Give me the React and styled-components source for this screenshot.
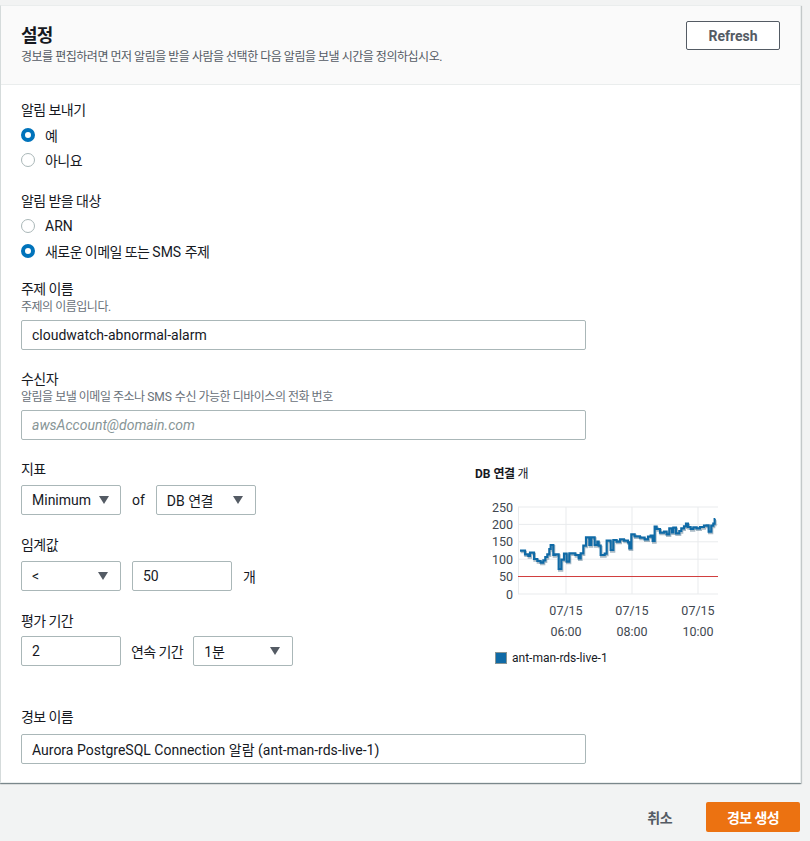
import React from 'react'
import styled, { createGlobalStyle } from 'styled-components'

const GlobalStyle = createGlobalStyle`
  html, body {
    margin: 0;
    padding: 0;
    background: #f2f3f3;
  }
  body {
    font-family: Roboto, "Noto Sans CJK KR", sans-serif;
    font-size: 14px;
    color: #16191f;
  }
  * {
    box-sizing: border-box;
  }
`

// hangul in the reference font is a little narrower than Noto CJK
const Ko = styled.span`
  letter-spacing: -0.04em;
`

const Page = styled.div`
  width: 810px;
  height: 841px;
  padding-top: 5px;
`

const Panel = styled.div`
  width: 801px;
  background: #fff;
  border: 1px solid #eaeded;
  border-left-color: #d5dbdb;
  box-shadow: 0 1px 1px 0 rgba(0, 28, 36, 0.3), 1px 1px 1px 0 rgba(0, 28, 36, 0.15),
    -1px 1px 1px 0 rgba(0, 28, 36, 0.15);
`

const Header = styled.div`
  display: flex;
  justify-content: space-between;
  align-items: flex-start;
  padding: 15px 20px 19px 20px;
  background: #fafafa;
  border-bottom: 1px solid #eaeded;
`

const Title = styled.h2`
  margin: 3px 0 0 0;
  font-size: 18px;
  line-height: 24px;
  font-weight: 700;
  color: #16191f;
`

const Subtitle = styled.div`
  margin-top: 1px;
  font-size: 12px;
  line-height: 16px;
  color: #545b64;
`

const OutlineButton = styled.button`
  width: 94px;
  height: 29px;
  border: 1px solid #545b64;
  border-radius: 2px;
  background: #fff;
  color: #545b64;
  font-family: inherit;
  font-size: 14px;
  font-weight: 700;
  padding: 0;
`

const Body = styled.div`
  padding: 15px 20px 18px 20px;
`

const Section = styled.div`
  margin-top: ${p => p.$mt ?? 0}px;
`

const Label = styled.div`
  font-size: 14px;
  line-height: 20px;
  color: #16191f;
`

const Desc = styled.div`
  font-size: 12px;
  line-height: 16px;
  color: #687078;
`

const RadioGroup = styled.div`
  margin-top: 3px;
  display: flex;
  flex-direction: column;
  gap: 1px;
`

const RadioRow = styled.label`
  display: flex;
  align-items: center;
  height: 24px;
  gap: 10px;
  font-size: 14px;
  color: #16191f;
`

const RadioDot = styled.span`
  width: 14px;
  height: 14px;
  border-radius: 50%;
  background: #fff;
  border: ${p => (p.$on ? '4px solid #0073bb' : '1px solid #aab7b8')};
`

const TextInput = styled.div`
  margin-top: ${p => p.$mt ?? 5}px;
  width: ${p => p.$w ?? 565}px;
  height: 30px;
  border: 1px solid #aab7b8;
  border-radius: 2px;
  padding: 0 10px;
  display: flex;
  align-items: center;
  font-size: 14px;
  color: ${p => (p.$placeholder ? '#879596' : '#16191f')};
  font-style: ${p => (p.$placeholder ? 'italic' : 'normal')};
  background: #fff;
`

const MetricArea = styled.div`
  display: flex;
  margin-top: 19px;
`

const LeftCol = styled.div`
  width: 454px;
`

const ChartCol = styled.div`
  padding-top: 7px;
`

const Row = styled.div`
  display: flex;
  align-items: center;
  margin-top: ${p => p.$mt ?? 6}px;
  gap: ${p => p.$gap ?? 11}px;
`

const Select = styled.div`
  width: 100px;
  height: 30px;
  border: 1px solid #aab7b8;
  border-radius: 2px;
  display: flex;
  align-items: center;
  justify-content: ${p => (p.$tight ? 'flex-start' : 'space-between')};
  gap: 8px;
  padding: 0 12px 0 10px;
  font-size: 14px;
  color: #16191f;
  background: #fff;
`

const Arrow = styled.span`
  width: 0;
  height: 0;
  border-left: 5px solid transparent;
  border-right: 5px solid transparent;
  border-top: 8px solid #545b64;
`

const Inline = styled.span`
  font-size: 14px;
  color: #16191f;
`

const ChartTitle = styled.div`
  font-size: 12px;
  line-height: 16px;
  color: #16191f;
  b {
    font-weight: 700;
  }
`

const ChartSvg = styled.svg`
  display: block;
  margin: 13px 0 0 5px;
`

const Legend = styled.div`
  display: flex;
  align-items: center;
  gap: 5px;
  margin: 10px 0 0 20px;
  font-size: 12px;
  line-height: 16px;
  color: #16191f;
`

const Swatch = styled.span`
  width: 12px;
  height: 12px;
  background: #0f6aa6;
  border: 1px solid #879596;
`

const Footer = styled.div`
  display: flex;
  justify-content: flex-end;
  align-items: center;
  padding: 19px 10px 0 0;
  gap: 14px;
`

const LinkButton = styled.button`
  height: 30px;
  border: none;
  background: transparent;
  padding: 0 20px;
  font-family: inherit;
  font-size: 14px;
  font-weight: 700;
  color: #545b64;
`

const PrimaryButton = styled.button`
  width: 94px;
  height: 30px;
  border: none;
  border-radius: 2px;
  background: #ec7211;
  color: #fff;
  font-family: inherit;
  font-size: 14px;
  font-weight: 700;
`

const linePath =
  'M120,167 H135 V178 H145 V183 H150 V173 H162 V192 H172 V198 H182 V203 H190 V196 H196 V186 H202 V178 H208 V162 H212 V150 H220 V180 H226 V178 H236 V222 H244 V194 H252 V176 H260 V200 H268 V175 H286 V180 H296 V190 H302 V175 H310 V152 H318 V127 H328 V150 H334 V127 H344 V150 H352 V140 H356 V152 H362 V180 H374 V176 H380 V137 H392 V165 H400 V135 H410 V140 H420 V133 H432 V137 H444 V142 H448 V160 H454 V118 H464 V124 H480 V128 H494 V133 H504 V125 H512 V122 H518 V138 H524 V95 H530 V102 H540 V113 H552 V110 H560 V118 H568 V100 H576 V112 H580 V98 H588 V115 H598 V108 H604 V100 H612 V94 H618 V86 H624 V96 H632 V102 H640 V97 H650 V100 H660 V96 H672 V92 H680 V91 H686 V110 H694 V92 H700 V86 H704 V72 H706'

const yTicks = [250, 200, 150, 100, 50, 0]
const xTicks = [86, 152, 218]
const axisFont = { fontSize: 12.5, fill: '#414750', fontFamily: 'Roboto, sans-serif' }

const Chart = () => (
  <ChartSvg width="250" height="145" viewBox="0 0 250 145">
    {yTicks.map((v, i) => {
      const y = 12 + i * 17.4
      return (
        <g key={v}>
          <line x1="38" x2="238" y1={y} y2={y} stroke="#e9ebed" strokeWidth="1" />
          <text x="33" y={y + 4.5} textAnchor="end" {...axisFont}>
            {v}
          </text>
        </g>
      )
    })}
    <line x1="38.5" x2="38.5" y1="12" y2="99" stroke="#e9ebed" />
    {xTicks.map(x => (
      <g key={x}>
        <line x1={x} x2={x} y1="12" y2="99" stroke="#e9ebed" />
        <text x={x} y="120" textAnchor="middle" {...axisFont}>
          07/15
        </text>
      </g>
    ))}
    <text x="86" y="141" textAnchor="middle" {...axisFont}>06:00</text>
    <text x="152" y="141" textAnchor="middle" {...axisFont}>08:00</text>
    <text x="218" y="141" textAnchor="middle" {...axisFont}>10:00</text>
    <line x1="38" x2="238" y1="81.5" y2="81.5" stroke="#d13f3f" strokeWidth="1" />
    <g transform="scale(0.3333)">
      <path d={linePath} fill="none" stroke="#0b3d5c" strokeOpacity="0.35" strokeWidth="8" transform="translate(2,4)" />
      <path d={linePath} fill="none" stroke="#0f6aa6" strokeWidth="6.5" />
    </g>
  </ChartSvg>
)

export default function App() {
  return (
    <Page>
      <GlobalStyle />
      <Panel>
        <Header>
          <div>
            <Title><Ko>설정</Ko></Title>
            <Subtitle>
              <Ko>경보를 편집하려면 먼저 알림을 받을 사람을 선택한 다음 알림을 보낼 시간을 정의하십시오.</Ko>
            </Subtitle>
          </div>
          <OutlineButton>Refresh</OutlineButton>
        </Header>
        <Body>
          <Section>
            <Label><Ko>알림 보내기</Ko></Label>
            <RadioGroup>
              <RadioRow><RadioDot $on /><Ko>예</Ko></RadioRow>
              <RadioRow><RadioDot /><Ko>아니요</Ko></RadioRow>
            </RadioGroup>
          </Section>
          <Section $mt={19}>
            <Label><Ko>알림 받을 대상</Ko></Label>
            <RadioGroup>
              <RadioRow><RadioDot />ARN</RadioRow>
              <RadioRow>
                <RadioDot $on />
                <span><Ko>새로운 이메일 또는 </Ko>SMS <Ko>주제</Ko></span>
              </RadioRow>
            </RadioGroup>
          </Section>
          <Section $mt={16}>
            <Label><Ko>주제 이름</Ko></Label>
            <Desc><Ko>주제의 이름입니다.</Ko></Desc>
            <TextInput>cloudwatch-abnormal-alarm</TextInput>
          </Section>
          <Section $mt={19}>
            <Label><Ko>수신자</Ko></Label>
            <Desc>
              <Ko>알림을 보낼 이메일 주소나 </Ko>SMS <Ko>수신 가능한 디바이스의 전화 번호</Ko>
            </Desc>
            <TextInput $placeholder>awsAccount@domain.com</TextInput>
          </Section>
          <MetricArea>
            <LeftCol>
              <Label><Ko>지표</Ko></Label>
              <Row>
                <Select $tight>Minimum<Arrow /></Select>
                <Inline>of</Inline>
                <Select>
                  <span>DB <Ko>연결</Ko></span>
                  <Arrow />
                </Select>
              </Row>
              <Section $mt={20}>
                <Label><Ko>임계값</Ko></Label>
                <Row $gap={11}>
                  <Select>&lt;<Arrow /></Select>
                  <TextInput $mt={0} $w={100}>50</TextInput>
                  <Inline><Ko>개</Ko></Inline>
                </Row>
              </Section>
              <Section $mt={20}>
                <Label><Ko>평가 기간</Ko></Label>
                <Row $mt={5} $gap={10}>
                  <TextInput $mt={0} $w={100}>2</TextInput>
                  <Inline><Ko>연속 기간</Ko></Inline>
                  <Select>
                    <span>1<Ko>분</Ko></span>
                    <Arrow />
                  </Select>
                </Row>
              </Section>
            </LeftCol>
            <ChartCol>
              <ChartTitle>
                <b>DB <Ko>연결</Ko></b> <Ko>개</Ko>
              </ChartTitle>
              <Chart />
              <Legend>
                <Swatch />
                ant-man-rds-live-1
              </Legend>
            </ChartCol>
          </MetricArea>
          <Section $mt={41}>
            <Label><Ko>경보 이름</Ko></Label>
            <TextInput $mt={7}>Aurora PostgreSQL Connection 알람 (ant-man-rds-live-1)</TextInput>
          </Section>
        </Body>
      </Panel>
      <Footer>
        <LinkButton><Ko>취소</Ko></LinkButton>
        <PrimaryButton><Ko>경보 생성</Ko></PrimaryButton>
      </Footer>
    </Page>
  )
}
